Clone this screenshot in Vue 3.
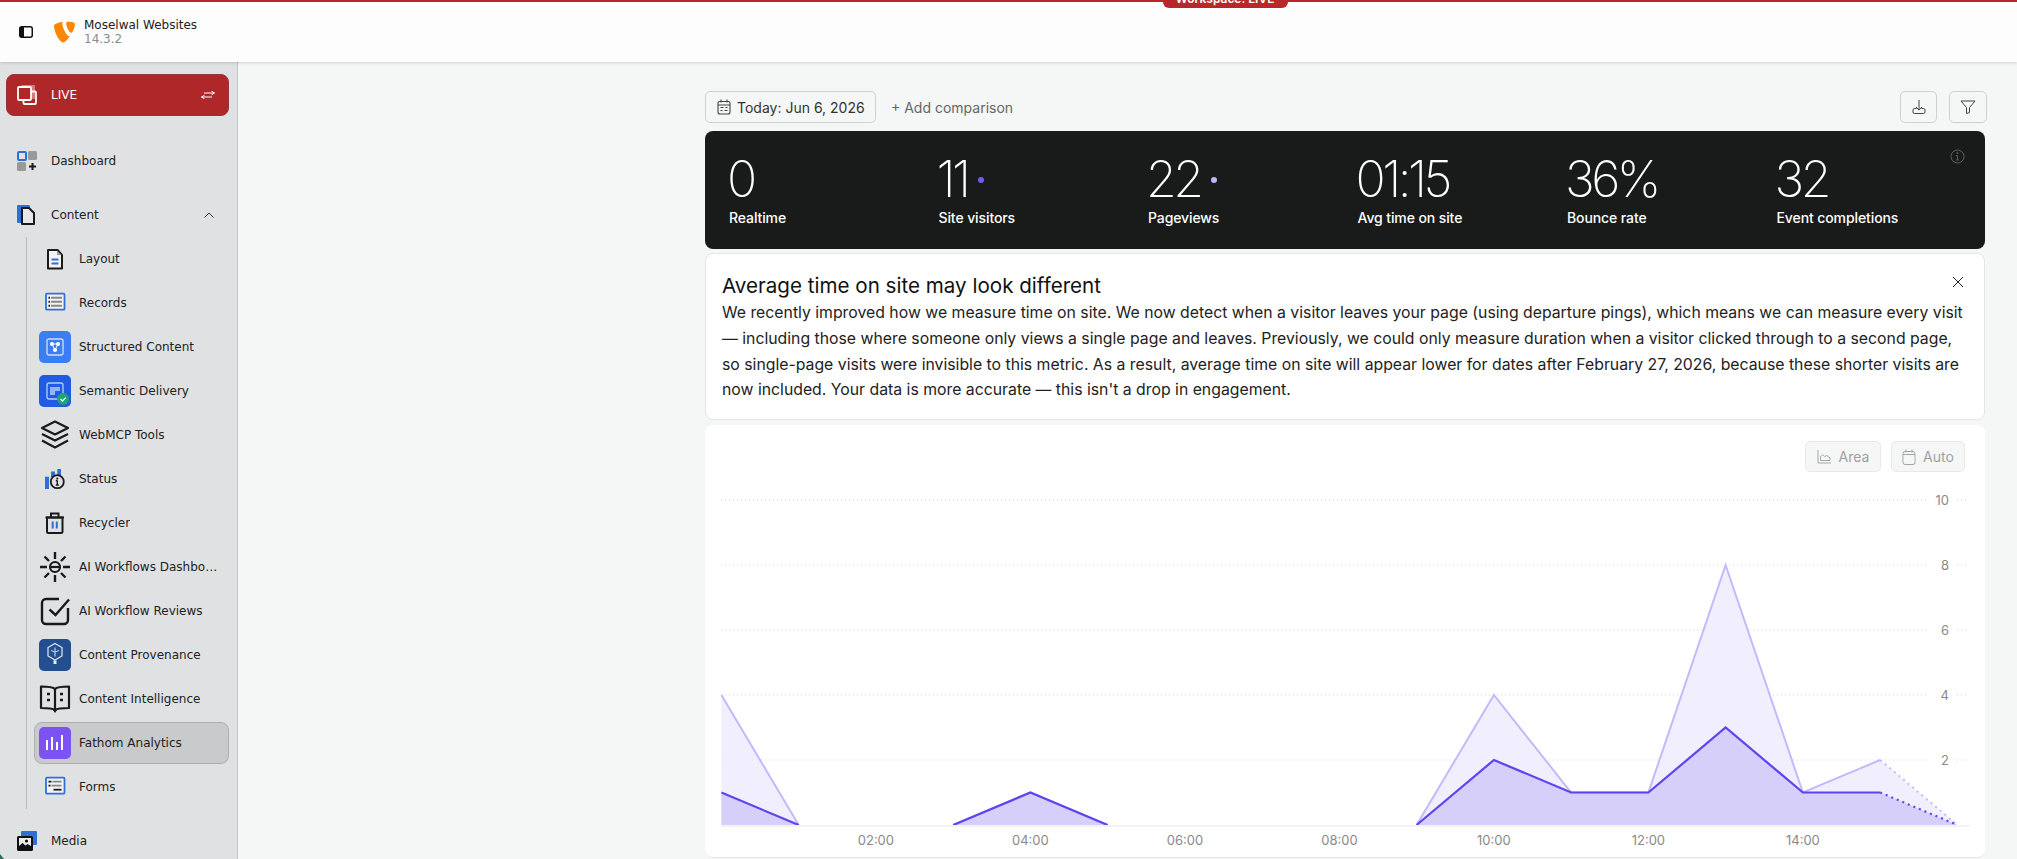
<script setup>
const B = '#2f6fd8'
const K = '#1a1a1a'
const icons = {
  dashboard: `<rect x="1" y="1" width="8" height="8" rx="1" fill="none" stroke="${B}" stroke-width="2"/><rect x="11" y="0" width="9" height="9" rx="1.5" fill="#999"/><rect x="0" y="11" width="9" height="9" rx="1.5" fill="#999"/><path d="M15.5 12v7M12 15.5h7" stroke="${K}" stroke-width="2"/>`,
  content: `<rect x="0" y="0" width="13" height="18" rx="1.200" fill="${B}"/><path d="M5 3h7l5 5v11H5z" fill="#e8e8ea" stroke="${K}" stroke-width="2" stroke-linejoin="round"/>`,
  layout: `<path d="M9 7h9.500l4.500 5v13.500H9z" fill="#f3f3f4" stroke="${K}" stroke-width="2" stroke-linejoin="round"/><path d="M18 7.500l4.500 4.500H18z" fill="#999"/><path d="M12.500 16.500h7M12.500 20.500h7" stroke="${B}" stroke-width="2"/>`,
  records: `<rect x="7" y="6.700" width="18.500" height="16" rx="1" fill="#f3f3f4" stroke="${B}" stroke-width="1.800"/><path d="M12 10.700h11M12 14.700h11M12 18.700h11" stroke="#888" stroke-width="2"/><path d="M9.500 10.700h1.500M9.500 14.700h1.500M9.500 18.700h1.500" stroke="${K}" stroke-width="2"/>`,
  structured: `<rect width="32" height="32" rx="5" fill="#3b7df2"/><rect x="8" y="8" width="16" height="16" rx="2" fill="none" stroke="#cfe0ff" stroke-width="1.300"/><path d="M13 13l3 6 3-6z" stroke="#fff" fill="none"/><circle cx="13" cy="13" r="2.100" fill="#fff"/><circle cx="19" cy="13" r="2.100" fill="#fff"/><circle cx="16" cy="19" r="2.100" fill="#fff"/>`,
  semantic: `<rect width="32" height="32" rx="5" fill="#1f5be3"/><rect x="8" y="8" width="16" height="16" rx="2" fill="none" stroke="#b9cdfb" stroke-width="1.300"/><path d="M11 12h10v4h-5v4h-5z" fill="#96b3f5"/><circle cx="24" cy="24" r="6" fill="#1ea672"/><path d="M21.500 24l2 2 3.200-3.400" fill="none" stroke="#fff" stroke-width="1.300"/>`,
  webmcp: `<path d="M16 2.500L29 9 16 15.500 3 9z" fill="none" stroke="${K}" stroke-width="2.200" stroke-linejoin="round"/><path d="M3 15l13 6.500L29 15" fill="none" stroke="${K}" stroke-width="2.200"/><path d="M3 21.500l13 7 13-7" fill="none" stroke="${K}" stroke-width="2.200"/>`,
  status: `<path d="M6 13.700h4V26H6z" fill="${B}"/><path d="M12 8.500h4V14h-4zM18.300 6H22v6h-3.700z" fill="${B}"/><circle cx="18.300" cy="18.700" r="6.500" fill="#e0e1e3" stroke="${K}" stroke-width="1.800"/><path d="M18.300 17.500v4.500M16.800 17.500h1.500M16.800 22h3" stroke="${K}" stroke-width="1.400"/><circle cx="18.300" cy="15.500" r="1" fill="${K}"/>`,
  recycler: `<path d="M8 10.500h15.500v14a1.500 1.500 0 0 1-1.500 1.500H9.500A1.500 1.500 0 0 1 8 24.500z" fill="none" stroke="${K}" stroke-width="2"/><path d="M6.500 10.500h18.500" stroke="${K}" stroke-width="2"/><path d="M12 10V6.500h7.500V10" fill="none" stroke="${K}" stroke-width="2"/><path d="M13.700 14.500v7M17.800 14.500v7" stroke="${B}" stroke-width="2"/>`,
  ai: `<circle cx="16" cy="16" r="5" fill="none" stroke="${K}" stroke-width="2.200"/><path d="M11.500 16h9" stroke="${K}" stroke-width="2.200"/><path d="M16 1v7M16 24v7M1 16h7M24 16h7M5.500 5.500l4.500 4.500M22 22l4.500 4.500M26.500 5.500L22 10M10 22l-4.500 4.500" stroke="${K}" stroke-width="2.400"/>`,
  review: `<path d="M20 4H7a4 4 0 0 0-4 4v17a4 4 0 0 0 4 4h18a4 4 0 0 0 4-4V13" fill="none" stroke="${K}" stroke-width="2.400"/><path d="M10.500 14.500l6 5.500L30 4.500" fill="none" stroke="${K}" stroke-width="2.400"/>`,
  provenance: `<rect width="32" height="32" rx="5" fill="#234e8f"/><path d="M16 4.500l7 4v8.500l-7 4-7-4V8.500z" fill="none" stroke="#e3ebf7" stroke-width="1.200"/><path d="M16 8.500v9M12 11.500l4 1.500 4-1.500" stroke="#a9c4ea" stroke-width="1.300" fill="none"/><path d="M14.500 21.500h3V25h-3z" fill="#e3ebf7"/>`,
  intel: `<path d="M16 6c-2-2-5-2.500-14-2.500V25c9 0 12 .5 14 2 2-1.500 5-2 14-2V3.500C21 3.500 18 4 16 6z" fill="none" stroke="${K}" stroke-width="2.200" stroke-linejoin="round"/><path d="M16 6v21" stroke="${K}" stroke-width="2.200"/><path d="M8 11h3M8 17h3M21 11h3M21 17h3" stroke="${K}" stroke-width="2.600"/><path d="M14 27l2 3 2-3z" fill="${K}"/>`,
  fathom: `<rect width="32" height="32" rx="5" fill="#7c52f2"/><path d="M8 13v10M13 10v13M18 15v8M23 8v15" stroke="#fff" stroke-width="2"/>`,
  forms: `<rect x="7" y="6.700" width="18.500" height="16" rx="1" fill="#f3f3f4" stroke="${B}" stroke-width="1.800"/><path d="M9.500 10.700h3M9.500 14.700h2" stroke="${K}" stroke-width="1.800"/><path d="M13.500 10.700h9M12.500 14.700h10" stroke="#888" stroke-width="1.800"/><path d="M14.500 18.700h8" stroke="${K}" stroke-width="1.800"/>`,
  media: `<rect x="4" y="0" width="16" height="14" rx="1.200" fill="${B}"/><rect x="0" y="5" width="16" height="15" rx="1.500" fill="#111"/><rect x="2" y="7" width="12" height="8" fill="#eee"/><circle cx="9.500" cy="10" r="1.600" fill="#111"/><path d="M2 15l3.500-3 3 2.500 2-1.500 3.500 2v1H2z" fill="#111"/>`
}
const subs = [
  ['layout', 'Layout'],
  ['records', 'Records'],
  ['structured', 'Structured Content'],
  ['semantic', 'Semantic Delivery'],
  ['webmcp', 'WebMCP Tools'],
  ['status', 'Status'],
  ['recycler', 'Recycler'],
  ['ai', 'AI Workflows Dashboard'],
  ['review', 'AI Workflow Reviews'],
  ['provenance', 'Content Provenance'],
  ['intel', 'Content Intelligence'],
  ['fathom', 'Fathom Analytics', true],
  ['forms', 'Forms']
].map(([icon, label, active]) => ({ icon, label, active }))

const stats = [
  { value: '0', label: 'Realtime' },
  { value: '11', label: 'Site visitors', dot: 'dark' },
  { value: '22', label: 'Pageviews', dot: 'light' },
  { value: '01:15', label: 'Avg time on site' },
  { value: '36%', label: 'Bounce rate' },
  { value: '32', label: 'Event completions' }
]

const noticeLines = [
  'We recently improved how we measure time on site. We now detect when a visitor leaves your page (using departure pings), which means we can measure every visit',
  '— including those where someone only views a single page and leaves. Previously, we could only measure duration when a visitor clicked through to a second page,',
  'so single-page visits were invisible to this metric. As a result, average time on site will appear lower for dates after February 27, 2026, because these shorter visits are',
  "now included. Your data is more accurate — this isn't a drop in engagement."
]

// chart geometry: svg origin sits at page (705, 480)
const X0 = 16.4
const STEP = 77.25
const Y0 = 345
const UNIT = 32.5
const px = h => +(X0 + STEP * h).toFixed(1)
const py = v => +(Y0 - UNIT * v).toFixed(1)
const pageviews = [4, 0, 0, 0, 1, 0, 0, 0, 0, 0, 4, 1, 1, 8, 1, 2, 0]
const visitors = [1, 0, 0, 0, 1, 0, 0, 0, 0, 0, 2, 1, 1, 3, 1, 1, 0]
const pts = (s, from, to) => s.slice(from, to + 1).map((v, i) => `${px(from + i)},${py(v)}`).join(' ')
const area = s => `${pts(s, 0, 16)} ${px(16)},${Y0} ${px(0)},${Y0}`
const gridY = [10, 8, 6, 4, 2].map(v => ({ v, y: py(v) }))
const gridSegs = gridY.flatMap(g => [
  { y: g.y, x1: 16, x2: 1222 },
  { y: g.y, x1: 1252, x2: 1261 }
])
const hours = [2, 4, 6, 8, 10, 12, 14].map(h => ({ x: px(h), t: String(h).padStart(2, '0') + ':00' }))
const solid = [
  [0, 1], [3, 5], [9, 15]
]
</script>

<template>
  <div class="app">
    <div class="topline"><span class="ws-pill"><span class="ws-text">Workspace: LIVE</span></span></div>
    <header class="header">
      <svg class="toggle" width="14" height="12" viewBox="0 0 14 12">
        <rect x=".75" y=".75" width="12.500" height="10.500" rx="2" fill="#fff" stroke="#111" stroke-width="1.500"/>
        <path d="M1 2a1 1 0 0 1 1-1h3v10H2a1 1 0 0 1-1-1z" fill="#111"/>
      </svg>
      <svg class="logo" width="22" height="22" viewBox="0 0 16 16">
        <path fill="#ff8700" d="M11.500 11c-.2.100-.4.100-.6.100-2 0-4.900-6.900-4.900-9.200 0-.8.200-1.100.5-1.400C4.100.8 1.100 1.700.2 2.900 0 3.100 0 3.500 0 3.900c0 3.600 3.800 11.700 6.500 11.700 1.200.1 3.300-2 5-4.600M10.200.5c2.500 0 5 .4 5 1.800 0 2.900-1.800 6.300-2.700 6.300-1.600 0-3.600-4.500-3.600-6.700 0-1 .4-1.400 1.300-1.400"/>
      </svg>
      <div class="brand">
        <div class="site">Moselwal Websites</div>
        <div class="ver">14.3.2</div>
      </div>
    </header>
    <div class="body">
      <aside class="sidebar">
        <div class="live">
          <svg width="20" height="20" viewBox="0 0 20 20">
            <rect x="4" y="0" width="14" height="14" rx="1" fill="#d27c7e"/>
            <rect x="6.500" y="6.500" width="12.500" height="12.500" rx="1" fill="none" stroke="#fff" stroke-width="1.800"/>
            <rect x="1" y="2" width="13" height="13" rx="1" fill="#b02729" stroke="#fff" stroke-width="1.800"/>
          </svg>
          <span class="live-t">LIVE</span>
          <svg class="swap" width="14" height="8" viewBox="0 0 14 8">
            <path d="M13.500 2H3M10.500 .2L13.500 2l-3 1.800M.5 6H11M3.500 4.200L.5 6l3 1.800" fill="none" stroke="#fff" stroke-width="1"/>
          </svg>
        </div>
        <div class="top-item dash">
          <svg class="ti" width="20" height="20" viewBox="0 0 20 20" v-html="icons.dashboard"></svg>
          <span>Dashboard</span>
        </div>
        <div class="top-item">
          <svg class="ti" width="20" height="20" viewBox="0 0 20 20" v-html="icons.content"></svg>
          <span class="grow">Content</span>
          <svg class="chev" width="10" height="6" viewBox="0 0 10 6"><path d="M.5 5.500L5 1l4.500 4.500" fill="none" stroke="#333" stroke-width="1"/></svg>
        </div>
        <div class="subtree">
          <div v-for="s in subs" :key="s.label" class="sub" :class="{ active: s.active }">
            <svg width="32" height="32" viewBox="0 0 32 32" v-html="icons[s.icon]"></svg>
            <span class="sub-t">{{ s.label }}</span>
          </div>
        </div>
        <div class="top-item media">
          <svg class="ti" width="20" height="20" viewBox="0 0 20 20" v-html="icons.media"></svg>
          <span>Media</span>
        </div>
      </aside>
      <main class="main">
        <div class="column">
          <div class="toolbar">
            <div class="date-btn">
              <svg width="14" height="16" viewBox="0 0 14 16" fill="none" stroke="#444" stroke-width="1.100">
                <rect x="1" y="2.500" width="12" height="12.500" rx="2"/>
                <path d="M4 .5v3M10 .5v3M1 6h12M3.500 8.500h3M8.500 8.500h2M3.500 11.500h2M7.500 11.500h3"/>
              </svg>
              <span>Today: Jun 6, 2026</span>
            </div>
            <span class="add">+ Add comparison</span>
            <span class="spacer"></span>
            <div class="icon-btn w36">
              <svg width="16" height="16" viewBox="0 0 16 16" fill="none" stroke="#444" stroke-width="1">
                <path d="M8 1v10M5 8l3 3 3-3"/>
                <path d="M5.500 9.500H3.500A1.500 1.500 0 0 0 2 11v2a1.500 1.500 0 0 0 1.500 1.500h9A1.500 1.500 0 0 0 14 13v-2a1.500 1.500 0 0 0-1.500-1.500h-2"/>
              </svg>
            </div>
            <div class="icon-btn w38">
              <svg width="16" height="14" viewBox="0 0 16 14" fill="none" stroke="#444" stroke-width="1">
                <path d="M1 1h14L9.500 7.500v5l-3 1v-6z" stroke-linejoin="round"/>
              </svg>
            </div>
          </div>
          <section class="stats">
            <div v-for="s in stats" :key="s.label" class="stat">
              <div class="num-row">
                <span class="num">{{ s.value }}</span>
                <i v-if="s.dot" class="dot" :class="s.dot"></i>
              </div>
              <div class="stat-l">{{ s.label }}</div>
            </div>
            <svg class="info" width="15" height="15" viewBox="0 0 15 15" fill="none" stroke="#5c5c5c" stroke-width="1">
              <circle cx="7.500" cy="7.500" r="6.500"/>
              <path d="M7.500 6.500v4.500M6 6.500h1.500M6 11h3"/>
              <circle cx="7.500" cy="4" r=".6" fill="#5c5c5c"/>
            </svg>
          </section>
          <section class="notice">
            <div class="notice-head">
              <h2>Average time on site may look different</h2>
              <svg class="close" width="12" height="12" viewBox="0 0 12 12"><path d="M1 1l10 10M11 1L1 11" stroke="#222" stroke-width="1"/></svg>
            </div>
            <p><span v-for="l in noticeLines" :key="l" class="line">{{ l }}</span></p>
          </section>
          <section class="chart-card">
            <div class="chart-tools">
              <div class="tool w76">
                <svg width="15" height="15" viewBox="0 0 15 15" fill="none" stroke="#a5a5a5" stroke-width="1"><path d="M1 1v13h13"/><path d="M3.500 11.500V8c1-2.500 2.500-2.500 3.500-1s2-1 3-.5 2 2 3 2.500v2.500z"/></svg>
                <span>Area</span>
              </div>
              <div class="tool w74">
                <svg width="14" height="16" viewBox="0 0 14 16" fill="none" stroke="#a5a5a5" stroke-width="1"><rect x="1" y="2.500" width="12" height="13" rx="2"/><path d="M1 5.500h12M4 .5v3M10 .5v3"/></svg>
                <span>Auto</span>
              </div>
            </div>
            <svg class="chart" width="1280" height="378" viewBox="0 0 1280 378">
              <line v-for="(g, i) in gridSegs" :key="i" :x1="g.x1" :x2="g.x2" :y1="g.y" :y2="g.y" stroke="#d4d4d4" stroke-width="1" stroke-dasharray="1 3"/>
              <polygon :points="area(pageviews)" fill="#f1eefe"/>
              <polygon :points="area(visitors)" fill="#d5cffa"/>
              <template v-for="(r, i) in solid" :key="i">
                <polyline :points="pts(pageviews, r[0], r[1])" fill="none" stroke="#c4b9fb" stroke-width="2"/>
              </template>
              <polyline :points="pts(pageviews, 15, 16)" fill="none" stroke="#c4b9fb" stroke-width="2" stroke-dasharray="2 4"/>
              <template v-for="(r, i) in solid" :key="'v' + i">
                <polyline :points="pts(visitors, r[0], r[1])" fill="none" stroke="#5e44ef" stroke-width="2.200"/>
              </template>
              <polyline :points="pts(visitors, 15, 16)" fill="none" stroke="#5e44ef" stroke-width="2.200" stroke-dasharray="2 4"/>
              <line x1="16" x2="1265" y1="346" y2="346" stroke="#f3f3f4" stroke-width="2"/>
              <text v-for="g in gridY" :key="g.v" x="1244" :y="g.y + 4.500" text-anchor="end" class="ax">{{ g.v }}</text>
              <text v-for="h in hours" :key="h.t" :x="h.x" y="365" text-anchor="middle" class="ax">{{ h.t }}</text>
            </svg>
          </section>
        </div>
      </main>
    </div>
    <i class="corner"></i>
  </div>
</template>

<style>
html, body { margin: 0; background: #f5f7f6; }
</style>

<style scoped>
.app { position: relative; width: 2017px; height: 859px; overflow: hidden; display: flex; flex-direction: column; background: #f5f7f6; font-family: Inter, "Liberation Sans", sans-serif; }
.topline { position: absolute; top: 0; left: 0; right: 0; height: 2px; background: #b8282b; z-index: 5; display: flex; justify-content: center; padding-left: 433px; }
.ws-pill { display: block; width: 125px; height: 8px; flex: none; background: #b8282b; border-radius: 0 0 6px 6px; color: #fff; font-size: 12px; font-weight: 600; line-height: 0; text-align: center; overflow: hidden; }
.ws-text { position: relative; top: -1px; }
.header { height: 62px; background: #fdfdfd; flex: none; display: flex; align-items: center; padding-left: 19px; box-sizing: border-box; box-shadow: 0 1px 3px rgba(0,0,0,.15); position: relative; z-index: 3; font-family: "DejaVu Sans", sans-serif; }
.toggle { margin-right: 21px; flex: none; margin-top: 2px; }
.logo { margin-right: 8px; flex: none; margin-top: 2px; }
.brand { font-size: 12px; line-height: 14px; padding-top: 2px; }
.site { color: #222; }
.ver { color: #8c8c8c; }
.body { flex: 1; display: flex; min-height: 0; }
.sidebar { width: 238px; flex: none; box-sizing: border-box; background: #e0e1e3; border-right: 1px solid #c4c5c7; overflow: hidden; padding: 12px 8px 0 6px; font-family: "DejaVu Sans", sans-serif; font-size: 12px; color: #222; }
.live { height: 42px; box-sizing: border-box; background: #b02729; border: 1px solid #96363a; border-radius: 8px; color: #fff; display: flex; align-items: center; padding-left: 10px; padding-right: 13px; }
.live-t { margin-left: 14px; flex: 1; font-size: 12px; }
.top-item { height: 44px; display: flex; align-items: center; padding-left: 11px; padding-right: 15px; flex: none; }
.top-item.dash { margin-top: 23px; margin-bottom: 10px; }
.top-item.media { margin-top: 10px; }
.ti { margin-right: 14px; flex: none; }
.grow { flex: 1; }
.subtree { margin-left: 20px; border-left: 1px solid #b9babc; padding-left: 7px; width: 195px; box-sizing: content-box; }
.sub { height: 44px; display: flex; align-items: center; padding-left: 5px; padding-right: 6px; box-sizing: border-box; position: relative; }
.sub svg { flex: none; margin-right: 8px; }
.sub-t { white-space: nowrap; overflow: hidden; text-overflow: ellipsis; min-width: 0; }
.sub.active::before { content: ""; position: absolute; left: 0; right: 0; top: 1px; bottom: 1px; background: #c9cacc; border: 1px solid #acadaf; border-radius: 8px; z-index: 0; }
.sub.active > * { position: relative; z-index: 1; }
.main { flex: 1; min-width: 0; display: flex; justify-content: flex-end; padding: 29px 32px 0 0; box-sizing: border-box; }
.column { width: 1280px; display: flex; flex-direction: column; }
.toolbar { display: flex; align-items: center; height: 32px; margin-right: -2px; margin-bottom: 8px; }
.date-btn { height: 32px; width: 171px; box-sizing: border-box; border: 1px solid #cfd1d1; border-radius: 5px; display: flex; align-items: center; padding-left: 11px; gap: 6px; font-size: 14px; color: #333; white-space: nowrap; }
.add { margin-left: 15px; font-size: 14px; color: #666; }
.spacer { flex: 1; }
.icon-btn { height: 32px; box-sizing: border-box; border: 1px solid #cfd1d1; border-radius: 5px; display: flex; align-items: center; justify-content: center; }
.w36 { width: 37px; margin-right: 12px; }
.w38 { width: 38px; }
.stats { position: relative; height: 118px; flex: none; box-sizing: border-box; background: #191b1a; border-radius: 8px; padding: 23px 0 0 24px; display: grid; grid-template-columns: repeat(6, 209.500px); color: #fff; margin-bottom: 4px; }
.num-row { display: flex; align-items: center; height: 50px; }
.num { font-size: 50px; font-weight: 200; line-height: 50px; letter-spacing: -3.500px; margin-left: -2px; }
.dot { width: 6px; height: 6px; border-radius: 50%; margin-left: 10px; margin-top: 1px; }
.dot.dark { background: #6e5cf6; }
.dot.light { background: #c0b5fa; }
.stat-l { font-size: 14px; font-weight: 500; margin-top: 5px; line-height: 18px; letter-spacing: -.1px; }
.info { position: absolute; right: 20px; top: 18px; }
.notice { height: 167px; flex: none; box-sizing: border-box; background: #fff; border: 1px solid #e4e6e6; border-radius: 8px; padding: 18px 20px 0 16px; margin-bottom: 5px; }
.notice-head { display: flex; justify-content: space-between; align-items: flex-start; }
h2 { margin: 0; font-size: 20.600px; font-weight: 400; line-height: 28px; color: #111; }
.close { margin-top: 4px; }
p { margin: 0; font-size: 15.800px; line-height: 25.800px; color: #222; }
.line { display: block; white-space: nowrap; }
.chart-card { flex: none; height: 433px; box-sizing: border-box; background: #fff; border-radius: 8px; border-bottom: 1px solid #e6e8e8; padding-top: 16px; overflow: hidden; }
.chart-tools { display: flex; justify-content: flex-end; gap: 10px; padding-right: 20px; }
.tool { height: 31px; box-sizing: border-box; background: #f5f7f6; border: 1px solid #e8e9e9; border-radius: 5px; display: flex; align-items: center; justify-content: center; gap: 7px; font-size: 14px; color: #a0a0a0; }
.w76 { width: 76px; }
.w74 { width: 74px; }
.chart { display: block; margin-top: 8px; }
.ax { font-family: Inter, sans-serif; font-size: 13px; fill: #8a8a8a; }
.corner { position: absolute; left: 0; bottom: 0; width: 0; height: 0; border-left: 4px solid #2f6f5f; border-top: 5px solid transparent; }
</style>
